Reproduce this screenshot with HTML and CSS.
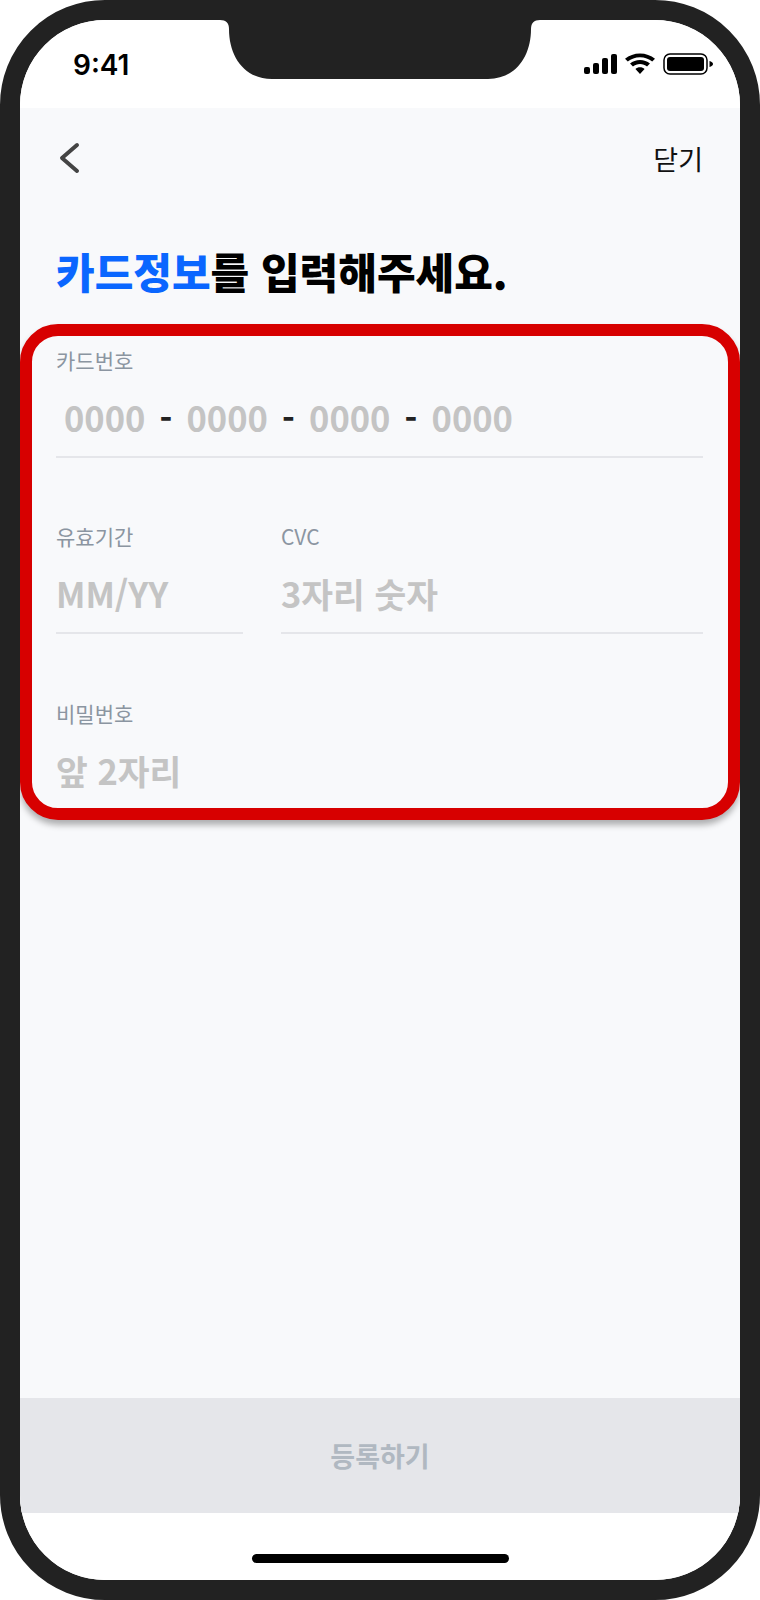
FILE: index.html
```html
<!DOCTYPE html>
<html lang="ko">
    <head>
        <meta charset="UTF-8">
        <meta name="viewport" content="width=device-width, initial-scale=1.0">
        <title>카드정보 입력</title>
        <link rel="stylesheet" href="styles.css">
    </head>
    <body>
        <div class="phone">
            <div class="screen">
                <div class="status-bar">
                    <span class="time">9:41</span>
                    <div class="status-icons">
                        <svg class="icon-signal" width="34" height="22" viewBox="0 0 34 22">
                            <rect x="1" y="14" width="6" height="7" rx="2"/>
                            <rect x="10" y="10" width="6" height="11" rx="2"/>
                            <rect x="19" y="5" width="6" height="16" rx="2"/>
                            <rect x="28" y="1" width="6" height="20" rx="2"/>
                        </svg>
                        <svg class="icon-wifi" width="30" height="22" viewBox="1.600 0 26.800 22" preserveAspectRatio="none">
                            <path d="M15 4.2c4.200 0 8 1.600 10.900 4.300l2.500-2.700C24.800 2.400 20.100 .4 15 .4S5.200 2.400 1.600 5.800l2.500 2.700C7 5.800 10.800 4.200 15 4.200z"/>
                            <path d="M15 11c2.400 0 4.600 .9 6.300 2.400l2.600-2.800C21.500 8.400 18.400 7.100 15 7.100s-6.500 1.300-8.900 3.500l2.600 2.800C10.400 11.900 12.600 11 15 11z"/>
                            <path d="M15 14.300c-1.600 0-3 .6-4.100 1.600L15 21l4.100-5.100c-1.100-1-2.500-1.600-4.100-1.600z"/>
                        </svg>
                        <svg class="icon-battery" width="50" height="22" viewBox="0 0 50 22">
                            <rect x="1" y="1" width="43" height="20" rx="6" fill="none" stroke="#000" stroke-width="1.500"/>
                            <rect x="4" y="4" width="37" height="14" rx="3"/>
                            <path d="M46.500 8v6c2-.5 3.500-1.700 3.500-3s-1.500-2.500-3.500-3z"/>
                        </svg>
                    </div>
                </div>
                <div class="content">
                    <div class="nav">
                        <svg class="icon-back" width="24" height="36" viewBox="0 0 24 36">
                            <path d="M19 5 L4 18 L19 31" fill="none" stroke="#444" stroke-width="4" stroke-linecap="round" stroke-linejoin="round"/>
                        </svg>
                        <span class="close">닫기</span>
                    </div>
                    <h1 class="title"><span class="accent">카드정보</span>를 입력해주세요.</h1>
                    <div class="card-form">
                        <div class="field">
                            <div class="label">카드번호</div>
                            <div class="value value-card">
                                <span>0000</span><span class="dash">-</span>
                                <span>0000</span><span class="dash">-</span>
                                <span>0000</span><span class="dash">-</span>
                                <span>0000</span>
                            </div>
                        </div>
                        <div class="field-row">
                            <div class="field field-expiry">
                                <div class="label">유효기간</div>
                                <div class="value">MM/YY</div>
                            </div>
                            <div class="field field-cvc">
                                <div class="label">CVC</div>
                                <div class="value">3자리 숫자</div>
                            </div>
                        </div>
                        <div class="field field-last">
                            <div class="label">비밀번호</div>
                            <div class="value">앞 2자리</div>
                        </div>
                    </div>
                </div>
                <div class="submit">등록하기</div>
                <div class="home-area">
                    <div class="home-indicator"></div>
                </div>
            </div>
            <svg class="notch" width="320" height="59" viewBox="0 0 320 59">
                <path d="M0 0 C6 0 9 3 9 9 C9 36 24 59 52 59 H268 C296 59 311 36 311 9 C311 3 314 0 320 0 Z" fill="#222"/>
            </svg>
        </div>
    </body>
</html>
```

FILE: styles.css
```css
* {
    box-sizing: border-box;
}
body {
    margin: 0;
    background-color: #fff;
    font-family: "Noto Sans CJK KR", "Noto Sans", sans-serif;
}
.phone {
    position: relative;
    width: 760px;
    height: 1600px;
    border: 20px solid #222;
    border-radius: 105px;
    background-color: #fff;
}
.screen {
    display: flex;
    flex-direction: column;
    height: 100%;
    border-radius: 85px;
    overflow: hidden;
    background-color: #fff;
}
.notch {
    position: absolute;
    top: 0;
    left: 200px;
}
.status-bar {
    display: flex;
    justify-content: space-between;
    align-items: center;
    height: 88px;
    padding: 0 27px 0 53px;
}
.time {
    margin-top: 2px;
    font-family: Inter, sans-serif;
    font-size: 28px;
    font-weight: 600;
    color: #000;
}
.status-icons {
    display: flex;
    align-items: center;
    gap: 8px;
}
.content {
    flex: 1;
    background-color: #f8f9fb;
}
.nav {
    display: flex;
    justify-content: space-between;
    align-items: center;
    height: 100px;
    padding: 0 37px 0 38px;
}
.close {
    font-size: 27px;
    font-weight: 400;
    color: #111;
}
.title {
    margin: 33px 0 0;
    padding-left: 36px;
    font-size: 42px;
    font-weight: 900;
    line-height: 60px;
    color: #000;
}
.accent {
    color: #0a66ff;
}
.card-form {
    height: 496px;
    margin-top: 23px;
    padding: 9px 25px 0 24px;
    border: 12px solid #d70000;
    border-radius: 38px;
    box-shadow: 0 5px 6px rgba(0, 0, 0, 0.3);
    background-color: #f8f9fb;
}
.field {
    height: 113px;
    border-bottom: 2px solid #e5e6ea;
}
.field-row {
    display: flex;
    gap: 38px;
    margin-top: 63px;
}
.field-expiry {
    width: 187px;
}
.field-cvc {
    flex: 1;
}
.field-last {
    margin-top: 64px;
    border-bottom: none;
}
.label {
    font-size: 21px;
    line-height: 30px;
    color: #8b95a1;
}
.value {
    margin-top: 16px;
    font-size: 34.5px;
    font-weight: 700;
    line-height: 52px;
    color: #c4c4c4;
}
.value-card {
    display: flex;
    justify-content: space-between;
    width: 464px;
    padding: 0 7px 0 8px;
}
.dash {
    color: #222;
}
.submit {
    height: 115px;
    font-size: 27px;
    font-weight: 700;
    line-height: 115px;
    text-align: center;
    background-color: #e5e6ea;
    color: #b0b8c1;
}
.home-area {
    display: flex;
    justify-content: center;
    height: 67px;
    padding-top: 41px;
}
.home-indicator {
    width: 257px;
    height: 9px;
    border-radius: 5px;
    background-color: #000;
}
```
